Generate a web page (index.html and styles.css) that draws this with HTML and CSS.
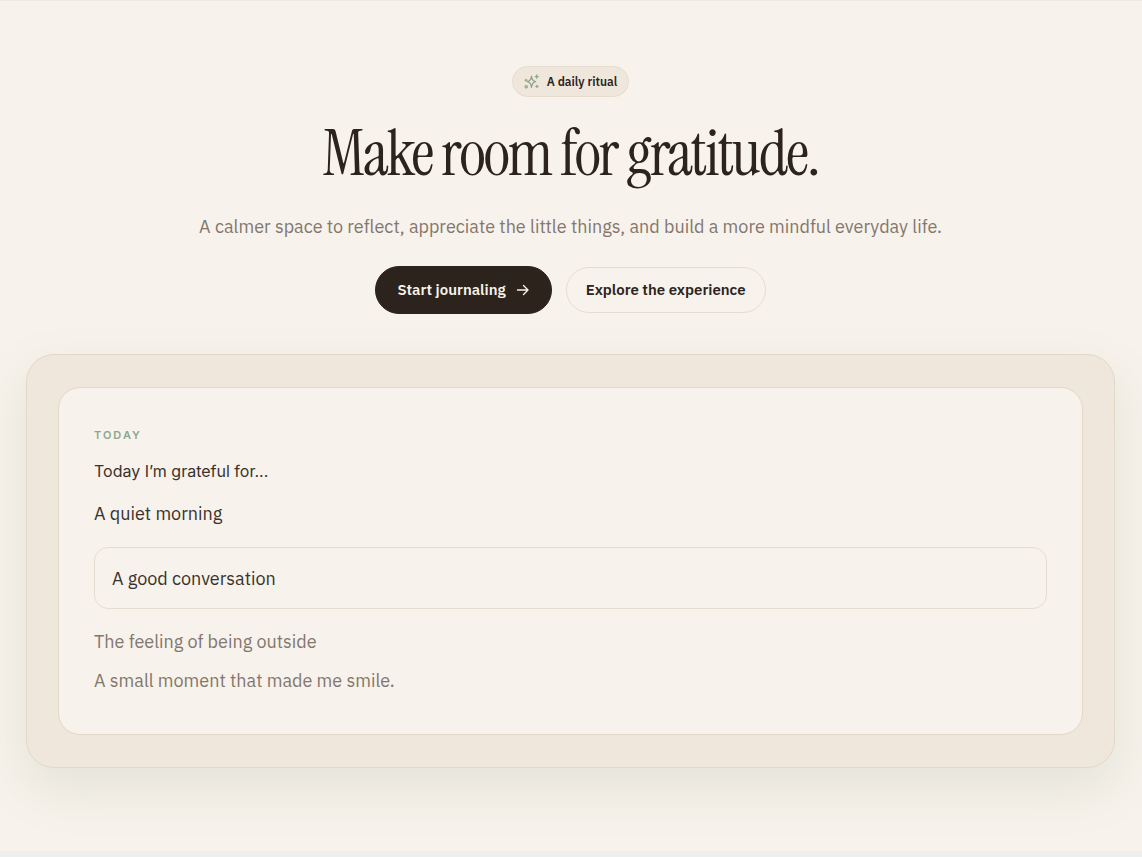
FILE: index.html
```html
<!DOCTYPE html>
<html lang="en">
<head>
    <meta charset="UTF-8">
    <meta name="viewport" content="width=device-width, initial-scale=1.0">
    <title>Make room for gratitude</title>
    <link rel="stylesheet" href="styles.css">
</head>
<body>
    <main class="hero">
        <div class="badge">
            <svg class="badge-icon" viewBox="0 0 16 16" aria-hidden="true">
                <path d="M8 2.2C8.4 5.8 9.2 7.4 12.4 8.2C9.2 9 8.4 10.6 8 14.2C7.6 10.6 6.8 9 3.6 8.2C6.8 7.4 7.6 5.8 8 2.2Z"/>
                <path d="M13.6 1v3.4M11.9 2.7h3.4M13.8 12v2.4M12.6 13.2h2.4M2.2 5.6v2M1.2 6.6h2"/>
                <circle cx="2.4" cy="13.6" r="1.2"/>
            </svg>
            <span>A daily ritual</span>
        </div>
        <h1>Make room for gratitude.</h1>
        <p class="lead">A calmer space to reflect, appreciate the little things, and build a more mindful everyday life.</p>
        <div class="actions">
            <button type="button" class="btn btn-primary">
                Start journaling
                <svg class="arrow" viewBox="0 0 14 14" aria-hidden="true">
                    <path d="M1.5 7h10.5M7.5 2.5L12 7L7.5 11.5"/>
                </svg>
            </button>
            <button type="button" class="btn btn-secondary">Explore the experience</button>
        </div>

        <section class="frame">
            <form class="journal">
                <p class="eyebrow">Today</p>
                <label class="prompt" for="entry">Today I’m grateful for...</label>
                <p class="entry">A quiet morning</p>
                <input class="entry-input" type="text" id="entry" value="A good conversation">
                <p class="entry muted">The feeling of being outside</p>
                <p class="entry muted">A small moment that made me smile.</p>
            </form>
        </section>
    </main>
</body>
</html>
```
FILE: styles.css
```css
* {
    box-sizing: border-box;
}

body {
    margin: 0;
    background: #eeeeec;
    color: #2c231d;
    font-family: "IBM Plex Sans", "Noto Sans", sans-serif;
}

.hero {
    display: flex;
    flex-direction: column;
    align-items: center;
    padding: 65px 27px 83px 26px;
    background: #f7f2eb;
    border-top: 1px solid #efeae3;
    overflow: hidden;
}

h1, p {
    margin: 0;
}

.badge {
    display: flex;
    align-items: center;
    gap: 8px;
    padding: 6px 11px;
    border: 1px solid #e6dccd;
    border-radius: 16px;
    background: #efe7db;
    font-size: 12px;
    font-weight: 600;
    line-height: 17px;
}

.badge-icon {
    width: 15px;
    height: 15px;
    fill: none;
    stroke: #8fa68b;
    stroke-width: 1.3;
    stroke-linecap: round;
    stroke-linejoin: round;
}

h1 {
    margin-top: 21px;
    font-family: "Instrument Serif", "Liberation Serif", serif;
    font-size: 64px;
    font-weight: 400;
    letter-spacing: -0.03em;
    line-height: 72px;
    text-align: center;
}

.lead {
    margin-top: 23px;
    color: #83776e;
    font-size: 18px;
    line-height: 28px;
    text-align: center;
}

.actions {
    display: flex;
    flex-wrap: wrap;
    align-items: center;
    justify-content: center;
    gap: 14px;
    margin-top: 25px;
}

.btn {
    display: flex;
    align-items: center;
    gap: 10px;
    padding: 0 19px;
    border: 1px solid #e6ddd2;
    border-radius: 24px;
    background: transparent;
    color: #2c231d;
    font-family: inherit;
    font-size: 15px;
    font-weight: 600;
    line-height: 44px;
    cursor: pointer;
}

.btn-primary {
    padding: 1px 21px;
    border-color: #2c231d;
    background: #2c231d;
    color: #f7f2eb;
}

.arrow {
    width: 14px;
    height: 14px;
    fill: none;
    stroke: currentColor;
    stroke-width: 1.4;
    stroke-linecap: round;
    stroke-linejoin: round;
}

.frame {
    width: 100%;
    margin-top: 40px;
    padding: 32px 31px;
    border: 1px solid #e3d8c8;
    border-radius: 28px;
    background: #efe7db;
    box-shadow: 0 20px 50px rgba(120, 145, 115, 0.15);
}

.journal {
    display: flex;
    flex-direction: column;
    padding: 36px 35px 40px;
    border: 1px solid #e3d8c8;
    border-radius: 22px;
    background: #f7f2eb;
}

.eyebrow {
    color: #8fa68b;
    font-family: Inter, sans-serif;
    font-size: 11px;
    font-weight: 600;
    letter-spacing: 2px;
    line-height: 22px;
    text-transform: uppercase;
}

.prompt {
    margin-top: 12px;
    color: #3a332d;
    font-family: Inter, sans-serif;
    font-size: 16px;
    line-height: 26px;
}

.entry {
    margin-top: 13px;
    color: #3a332d;
    font-size: 18px;
    line-height: 26px;
}

.prompt + .entry {
    margin-top: 17px;
}

.entry-input {
    width: 100%;
    height: 62px;
    margin: 20px 0 7px;
    padding: 0 17px;
    border: 1px solid #e6ddd2;
    border-radius: 14px;
    background: transparent;
    color: #3a332d;
    font-family: inherit;
    font-size: 18px;
}

.entry.muted {
    color: #83776e;
}
```
